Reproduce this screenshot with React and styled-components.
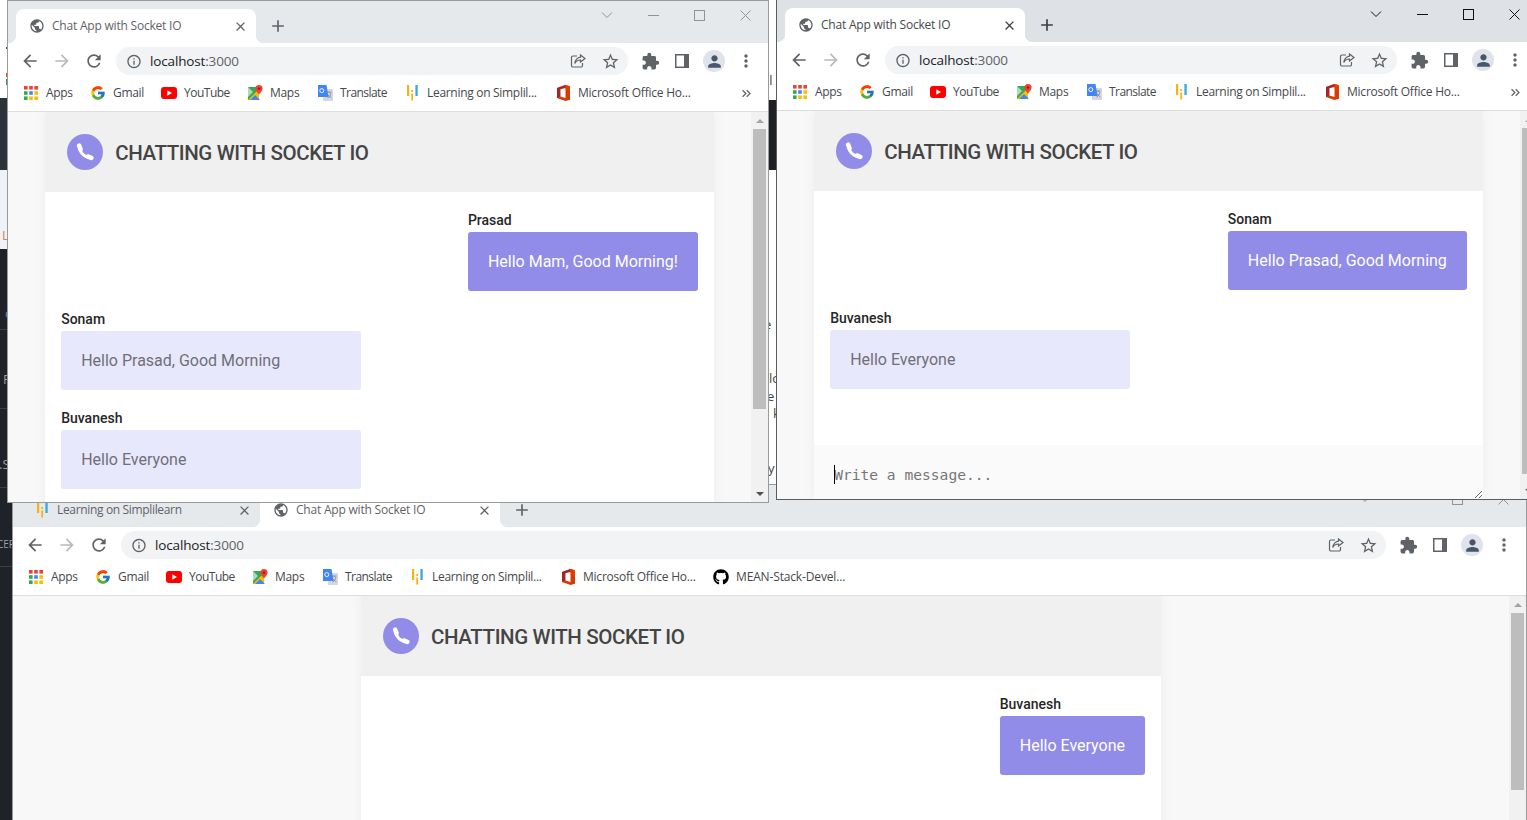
import React from 'react'
import styled, { createGlobalStyle } from 'styled-components'
import { FcGoogle } from 'react-icons/fc'
import { FaGithub } from 'react-icons/fa'
import {
  MdArrowBack, MdArrowForward, MdRefresh, MdInfoOutline, MdStarBorder,
  MdExtension, MdPerson, MdMoreVert, MdPublic, MdClose, MdAdd, MdKeyboardDoubleArrowRight
} from 'react-icons/md'

const UI_FONT = `"Open Sans", "Noto Sans", sans-serif`

const GlobalStyle = createGlobalStyle`
  html, body { margin: 0; padding: 0; background: #fff; overflow: hidden; }
  * { box-sizing: border-box; }
`

const Desktop = styled.div`
  position: relative;
  width: 1527px;
  height: 820px;
  overflow: hidden;
  background: #fff;
`

/* whatever is open behind the browser windows */
const BehindStrip = styled.div`
  position: absolute;
  top: 0;
  left: ${p => p.$left}px;
  width: ${p => p.$width}px;
  height: 820px;
  display: flex;
  flex-direction: column;
  overflow: hidden;
`

const StripBlock = styled.div`
  height: ${p => p.$h}px;
  flex: none;
  background: ${p => p.$bg};
  border-bottom: ${p => (p.$line ? '1px solid #3a3f45' : 'none')};
`

const Fragment = styled.span`
  position: absolute;
  left: ${p => p.$x}px;
  top: ${p => p.$y}px;
  font: ${p => p.$size || 13}px/16px ${UI_FONT};
  color: ${p => p.$color || '#444'};
`

const Speck = styled.span`
  position: absolute;
  left: 6px;
  top: ${p => p.$y}px;
  width: 1px;
  height: ${p => p.$h}px;
  background: ${p => p.$color};
`

const Window = styled.div`
  position: absolute;
  left: ${p => p.$left}px;
  top: ${p => p.$top}px;
  width: ${p => p.$width}px;
  height: ${p => p.$height}px;
  z-index: ${p => p.$z};
  border: 1px solid ${p => (p.$active ? '#5c5c5c' : '#9a9a9a')};
  background: #fff;
  display: flex;
  flex-direction: column;
  overflow: hidden;
`

const TabStrip = styled.div`
  height: 42px;
  flex: none;
  display: flex;
  background: ${p => (p.$active ? '#dee1e6' : '#e6e9ec')};
  padding-left: 8px;
`

const Tabs = styled.div`
  display: flex;
  align-items: flex-end;
  height: 42px;
`

const Tab = styled.div`
  position: relative;
  width: ${p => (p.$selected ? 240 : 239)}px;
  height: 34px;
  flex: none;
  display: flex;
  align-items: center;
  padding: 0 8px 0 13px;
  gap: 7px;
  background: ${p => (p.$selected ? '#fff' : 'transparent')};
  border-radius: 8px 8px 0 0;
  ${p => p.$selected && `
    &::before, &::after {
      content: '';
      position: absolute;
      bottom: 0;
      width: 8px;
      height: 8px;
      background: radial-gradient(circle at var(--c), transparent 8px, #fff 8.5px);
    }
    &::before { left: -8px; --c: 0 0; }
    &::after { right: -8px; --c: 100% 0; }
  `}
`

const TabIcon = styled.span`
  width: 16px;
  height: 16px;
  flex: none;
  display: flex;
  align-items: center;
  justify-content: center;
  color: #5f6368;
  font-size: 18px;
`

const TabTitle = styled.span`
  flex: 1;
  font: 12px/16px ${UI_FONT};
  letter-spacing: ${p => (p.$selected ? -0.21 : -0.34)}px;
  color: ${p => (p.$active ? '#45494d' : '#5f6368')};
  white-space: nowrap;
  overflow: hidden;
`

const TabClose = styled.span`
  width: 16px;
  height: 16px;
  display: flex;
  align-items: center;
  justify-content: center;
  flex: none;
  font-size: 15px;
  color: ${p => (p.$active ? '#3c4043' : '#5f6368')};
`

const NewTab = styled.span`
  align-self: flex-end;
  height: 34px;
  margin-left: 12px;
  display: flex;
  align-items: center;
  font-size: 20px;
  color: ${p => (p.$active ? '#3c4043' : '#5f6368')};
`

const WindowControls = styled.div`
  display: flex;
  margin-left: auto;
  height: 28px;
`

const WindowControl = styled.span`
  width: 46px;
  display: flex;
  align-items: center;
  justify-content: center;
  color: ${p => (p.$active ? '#111' : '#8f9499')};
`

const Toolbar = styled.div`
  height: 33px;
  flex: none;
  display: flex;
  padding: 4px 6px 1px;
  background: #fff;
`

const ToolButton = styled.span`
  width: 32px;
  height: 28px;
  flex: none;
  display: flex;
  align-items: center;
  justify-content: center;
  font-size: ${p => p.$size || 20}px;
  color: ${p => p.$color || '#5f6368'};
`

const Omnibox = styled.div`
  flex: 1;
  margin: 0 6px;
  height: 28px;
  border-radius: 14px;
  background: #f1f3f4;
  display: flex;
  align-items: center;
  padding: 0 2px 0 10px;
`

const SiteInfo = styled.span`
  width: 16px;
  height: 16px;
  display: flex;
  align-items: center;
  justify-content: center;
  font-size: 17px;
  color: #5f6368;
  margin-right: 8px;
`

const Url = styled.span`
  flex: 1;
  font: 13.5px/18px ${UI_FONT};
  letter-spacing: -0.15px;
  color: #202124;
  & > span { color: #5f6368; }
`

const Avatar = styled.span`
  width: 22px;
  height: 22px;
  border-radius: 50%;
  background: #e0e3e9;
  display: flex;
  align-items: center;
  justify-content: center;
  font-size: 19px;
  color: #47566f;
`

const BookmarksBar = styled.div`
  height: 36px;
  flex: none;
  display: flex;
  align-items: center;
  gap: 17px;
  padding: 0 14px 1px 15px;
  border-bottom: 1px solid #dcdddf;
  background: #fff;
`

const Bookmark = styled.div`
  display: flex;
  align-items: center;
  gap: 7px;
  flex: none;
`

const BookmarkIcon = styled.span`
  width: 16px;
  height: 16px;
  display: flex;
  align-items: center;
  justify-content: center;
  font-size: 16px;
`

const BookmarkLabel = styled.span`
  width: ${p => p.$w}px;
  font: 12px/16px ${UI_FONT};
  letter-spacing: ${p => p.$tracking || -0.3}px;
  color: #45494d;
  white-space: nowrap;
`

const MoreBookmarks = styled.span`
  margin-left: auto;
  display: flex;
  font-size: 15px;
  color: #5f6368;
`

const Viewport = styled.div`
  flex: 1;
  min-height: 0;
  display: flex;
  background: #f8f8f8;
`

const PageArea = styled.div`
  flex: 1;
  min-width: 0;
  overflow: hidden;
`

const Scrollbar = styled.div`
  width: 17px;
  flex: none;
  background: #f1f1f1;
  display: flex;
  flex-direction: column;
  align-items: center;
`

const ScrollArrow = styled.span`
  height: 17px;
  flex: none;
  display: flex;
  align-items: center;
  &::after {
    content: '';
    border-left: 4px solid transparent;
    border-right: 4px solid transparent;
    ${p => (p.$down ? 'border-top: 4px solid #505050;' : 'border-bottom: 4px solid #a3a3a3;')}
  }
`

const ScrollThumb = styled.span`
  width: 13px;
  flex: none;
  height: ${p => p.$h}px;
  background: #bdbdbd;
`

const ScrollSpacer = styled.span`
  flex: 1;
`

const ChatWindow = styled.div`
  width: 90%;
  max-width: 800px;
  min-height: 100%;
  margin: 0 auto;
  background: #fff;
  box-shadow: 0 0 12px rgba(0, 0, 0, 0.05);
`

const ChatHeader = styled.header`
  height: 80px;
  display: flex;
  align-items: center;
  gap: 12px;
  padding-left: 22px;
  background: #f0f0f0;
`

const CallBadge = styled.span`
  width: 36px;
  height: 36px;
  border-radius: 50%;
  background: #908ce8;
  display: flex;
  align-items: center;
  justify-content: center;
`

const ChatTitle = styled.h1`
  margin: 1px 0 0;
  font: 500 20.5px/28px Roboto, sans-serif;
  letter-spacing: -0.39px;
  color: #444;
  text-transform: uppercase;
`

const MessageList = styled.div`
  display: flex;
  flex-direction: column;
  gap: 20px;
  padding: 20px 16px 0;
  min-height: ${p => p.$minHeight || 0}px;
`

const Message = styled.div`
  display: flex;
  flex-direction: column;
  gap: 4px;
  align-self: ${p => (p.$own ? 'flex-end' : 'flex-start')};
`

const Sender = styled.span`
  font: 500 14px/16px Roboto, sans-serif;
  color: #262626;
`

const Bubble = styled.div`
  width: ${p => (p.$own ? 'auto' : '300px')};
  padding: 20px;
  border-radius: 3px;
  font: 400 16px/19px Roboto, sans-serif;
  background: ${p => (p.$own ? '#908ce8' : '#e8e8fc')};
  color: ${p => (p.$own ? '#fff' : '#6f6f78')};
`

const Composer = styled.div`
  position: relative;
  display: flex;
  height: 54px;
`

const ComposerInput = styled.textarea`
  width: 100%;
  height: 54px;
  border: none;
  outline: none;
  padding: 21px 20px 0 20px;
  background: #fafafa;
  font: 14.6px/17px "DejaVu Sans Mono", "Liberation Mono", monospace;
  &::placeholder { color: #767676; }
`

const Caret = styled.span`
  position: absolute;
  left: 20px;
  top: 20px;
  width: 1px;
  height: 19px;
  background: #000;
`

const PhoneGlyph = () => (
  <svg width="18" height="18" viewBox="0 0 18 18" fill="none" stroke="#fff" strokeLinecap="round">
    <path d="M3.300 3.500C3.500 9.500 8.500 14.500 14.500 14.700" strokeWidth="3" />
    <path d="M3.200 2.700 4.500 6.200" strokeWidth="4.600" />
    <path d="M11.800 13.500 15.300 14.800" strokeWidth="4.600" />
  </svg>
)

const ChevronGlyph = () => (
  <svg width="12" height="8" viewBox="0 0 12 8" fill="none" stroke="currentColor">
    <path d="M1 1.500 6 6.500 11 1.500" />
  </svg>
)

const MinimizeGlyph = () => (
  <svg width="11" height="3" viewBox="0 0 11 3" stroke="currentColor">
    <path d="M0 1.500H11" />
  </svg>
)

const MaximizeGlyph = () => (
  <svg width="11" height="11" viewBox="0 0 11 11" fill="none" stroke="currentColor">
    <rect x="0.500" y="0.500" width="10" height="10" />
  </svg>
)

const CloseGlyph = () => (
  <svg width="11" height="11" viewBox="0 0 11 11" fill="none" stroke="currentColor">
    <path d="M0.500 0.500 10.500 10.500M10.500 0.500 0.500 10.500" />
  </svg>
)

const ShareGlyph = () => (
  <svg width="16" height="16" viewBox="0 0 16 16" fill="none" stroke="#5f6368" strokeWidth="1.200">
    <path d="M7 3H3a1.500 1.500 0 0 0-1.500 1.500v8A1.500 1.500 0 0 0 3 14h8a1.500 1.500 0 0 0 1.500-1.500V10" />
    <path d="M10.500 2 15 5.600 10.500 9V7C8 7 6 8 4.800 10.500 5 7.200 7.500 4.400 10.500 4.200Z" />
  </svg>
)

const PanelGlyph = () => (
  <svg width="14" height="14" viewBox="0 0 14 14">
    <rect width="14" height="14" fill="#5f6368" />
    <rect x="1.500" y="1.500" width="7.500" height="11" fill="#fff" />
  </svg>
)

const AppsGlyph = () => {
  const colors = ['#ea4335', '#ea4335', '#ea4335', '#34a853', '#4285f4', '#fbbc04', '#34a853', '#fbbc04', '#fbbc04']
  return (
    <svg width="14" height="14" viewBox="0 0 14 14">
      {colors.map((c, i) => (
        <rect key={i} x={(i % 3) * 5.2} y={Math.floor(i / 3) * 5.2} width="3.600" height="3.600" fill={c} />
      ))}
    </svg>
  )
}

const YouTubeGlyph = () => (
  <svg width="16" height="12" viewBox="0 0 16 12">
    <rect width="16" height="12" rx="3" fill="#f00" />
    <path d="M6.300 3.300 11 6 6.300 8.700Z" fill="#fff" />
  </svg>
)

const MapsGlyph = () => (
  <svg width="16" height="16" viewBox="0 0 16 16">
    <path d="M1 2h11v13H1Z" fill="#34a853" />
    <path d="M1 15 12 4v11Z" fill="#fbbc04" />
    <path d="M3 15 8 10l5 5Z" fill="#4285f4" />
    <path d="M1 2 6 7 1 12Z" fill="#e8eaed" opacity="0.7" />
    <path d="M12 0a3.600 3.600 0 0 1 3.600 3.600C15.600 6 12 9.500 12 9.500S8.400 6 8.400 3.600A3.600 3.600 0 0 1 12 0Z" fill="#ea4335" />
    <circle cx="12" cy="3.600" r="1.200" fill="#a50e0e" />
  </svg>
)

const TranslateGlyph = () => (
  <svg width="16" height="16" viewBox="0 0 16 16">
    <rect x="6" y="4" width="10" height="12" fill="#d5d8dc" />
    <path d="M10 7h4.500M12.200 7v1M10.500 13c2-1 3-2.500 3.400-5M11 9.500c.6 1.500 1.800 2.600 3.400 3.300" stroke="#7b8087" fill="none" strokeWidth="0.800" />
    <path d="M1 0h8.500l2 12H1Z" fill="#4285f4" />
    <circle cx="4.800" cy="5.600" r="2" fill="none" stroke="#fff" strokeWidth="0.900" />
  </svg>
)

const SimplilearnGlyph = () => (
  <svg width="11" height="16" viewBox="0 0 11 16">
    <rect x="0" y="0" width="2.200" height="11" fill="#f9b115" />
    <rect x="4.300" y="5" width="1.800" height="2" fill="#f9b115" />
    <rect x="4.300" y="8.500" width="1.800" height="7" fill="#f9b115" />
    <rect x="8.400" y="0" width="2.300" height="11" fill="#36a9e1" />
  </svg>
)

const OfficeGlyph = () => (
  <svg width="13" height="16" viewBox="0 0 13 16">
    <path d="M0 3 8.500 0 13 1.300v13.400L8.500 16 0 13Z" fill="#d83b01" />
    <path d="M0 3 8.500 0v2.500L3.500 4.300v7L0 13Z" fill="#a4262c" />
    <path d="M3.500 4.300 8.500 3v10l-5-1.500Z" fill="#fff" />
    <path d="M8.500 0 13 1.300V8L8.500 4Z" fill="#eb3c00" />
  </svg>
)

const BOOKMARKS = [
  { icon: <AppsGlyph />, label: 'Apps', w: 27 },
  { icon: <FcGoogle />, label: 'Gmail', w: 31 },
  { icon: <YouTubeGlyph />, label: 'YouTube', w: 46, tracking: -0.5 },
  { icon: <MapsGlyph />, label: 'Maps', w: 30 },
  { icon: <TranslateGlyph />, label: 'Translate', w: 47, tracking: -0.55 },
  { icon: <SimplilearnGlyph />, label: 'Learning on Simplil...', w: 111 },
  { icon: <OfficeGlyph />, label: 'Microsoft Office Ho...', w: 113, tracking: -0.23 },
]

const ChromeFrame = ({ left, top, width, height, z, active, tabs, github, thumb, children }) => (
  <Window $left={left} $top={top} $width={width} $height={height} $z={z} $active={active}>
    <TabStrip $active={active}>
      <Tabs>
        {tabs.map(t => (
          <Tab key={t.title} $selected={t.selected}>
            <TabIcon>{t.icon}</TabIcon>
            <TabTitle $active={active} $selected={t.selected}>{t.title}</TabTitle>
            <TabClose $active={active}><MdClose /></TabClose>
          </Tab>
        ))}
      </Tabs>
      <NewTab $active={active}><MdAdd /></NewTab>
      <WindowControls>
        <WindowControl $active={active}><ChevronGlyph /></WindowControl>
        <WindowControl $active={active}><MinimizeGlyph /></WindowControl>
        <WindowControl $active={active}><MaximizeGlyph /></WindowControl>
        <WindowControl $active={active}><CloseGlyph /></WindowControl>
      </WindowControls>
    </TabStrip>

    <Toolbar>
      <ToolButton><MdArrowBack /></ToolButton>
      <ToolButton $color="#b8babd"><MdArrowForward /></ToolButton>
      <ToolButton><MdRefresh /></ToolButton>
      <Omnibox>
        <SiteInfo><MdInfoOutline /></SiteInfo>
        <Url>localhost<span>:3000</span></Url>
        <ToolButton><ShareGlyph /></ToolButton>
        <ToolButton $size={19}><MdStarBorder /></ToolButton>
      </Omnibox>
      <ToolButton $size={19}><MdExtension /></ToolButton>
      <ToolButton><PanelGlyph /></ToolButton>
      <ToolButton><Avatar><MdPerson /></Avatar></ToolButton>
      <ToolButton><MdMoreVert /></ToolButton>
    </Toolbar>

    <BookmarksBar>
      {BOOKMARKS.map(b => (
        <Bookmark key={b.label}>
          <BookmarkIcon>{b.icon}</BookmarkIcon>
          <BookmarkLabel $w={b.w} $tracking={b.tracking}>{b.label}</BookmarkLabel>
        </Bookmark>
      ))}
      {github ? (
        <Bookmark>
          <BookmarkIcon><FaGithub /></BookmarkIcon>
          <BookmarkLabel $w={109} $tracking={-0.15}>MEAN-Stack-Devel...</BookmarkLabel>
        </Bookmark>
      ) : (
        <MoreBookmarks><MdKeyboardDoubleArrowRight /></MoreBookmarks>
      )}
    </BookmarksBar>

    <Viewport>
      <PageArea>{children}</PageArea>
      <Scrollbar>
        <ScrollArrow />
        <ScrollThumb $h={thumb} />
        <ScrollSpacer />
        <ScrollArrow $down />
      </Scrollbar>
    </Viewport>
  </Window>
)

const Chat = ({ messages, minHeight, composer }) => (
  <ChatWindow>
    <ChatHeader>
      <CallBadge><PhoneGlyph /></CallBadge>
      <ChatTitle>Chatting with Socket IO</ChatTitle>
    </ChatHeader>
    <MessageList $minHeight={minHeight}>
      {messages.map(m => (
        <Message key={m.sender} $own={m.own}>
          <Sender>{m.sender}</Sender>
          <Bubble $own={m.own}>{m.text}</Bubble>
        </Message>
      ))}
    </MessageList>
    {composer && (
      <Composer>
        <ComposerInput readOnly placeholder="Write a message..." />
        <Caret />
      </Composer>
    )}
  </ChatWindow>
)

const chatTab = { title: 'Chat App with Socket IO', icon: <MdPublic />, selected: true }
const learnTab = { title: 'Learning on Simplilearn', icon: <SimplilearnGlyph /> }

export default function App() {
  return (
    <Desktop>
      <GlobalStyle />

      <BehindStrip $left={0} $width={12}>
        <StripBlock $h={98} $bg="#fff" />
        <StripBlock $h={72} $bg="#2d333b" />
        <StripBlock $h={79} $bg="#eef3f7" />
        <StripBlock $h={81} $bg="#1f2329" $line />
        <StripBlock $h={79} $bg="#1f2329" $line />
        <StripBlock $h={79} $bg="#1f2329" $line />
        <StripBlock $h={79} $bg="#1f2329" $line />
        <StripBlock $h={254} $bg="#1f2329" />
        <Speck $y={47} $h={2} $color="#555" />
        <Speck $y={73} $h={4} $color="#e0483a" />
        <Speck $y={79} $h={6} $color="#3a9a55" />
        <Fragment $x={2} $y={227} $color="#c98a5a">L</Fragment>
        <Fragment $x={5} $y={305} $color="#5b8fa8">c</Fragment>
        <Fragment $x={3} $y={371} $color="#9aa0a6">P</Fragment>
        <Fragment $x={-1} $y={456} $color="#9aa0a6">.S</Fragment>
        <Fragment $x={-3} $y={536} $size={10} $color="#9aa0a6">CEF</Fragment>
      </BehindStrip>

      <BehindStrip $left={768} $width={10}>
        <StripBlock $h={100} $bg="#fff" />
        <StripBlock $h={70} $bg="#1e2023" />
        <StripBlock $h={650} $bg="#fff" />
        <Fragment $x={-5} $y={72}>cl</Fragment>
        <Fragment $x={-4} $y={316}>e</Fragment>
        <Fragment $x={1} $y={370}>lo</Fragment>
        <Fragment $x={-1} $y={388}>e</Fragment>
        <Fragment $x={5} $y={405}>k</Fragment>
        <Fragment $x={0} $y={460}>y</Fragment>
      </BehindStrip>

      <ChromeFrame
        left={12} top={484} width={1515} height={420} z={1}
        tabs={[learnTab, chatTab]} github thumb={177}
      >
        <Chat messages={[{ sender: 'Buvanesh', text: 'Hello Everyone', own: true }]} minHeight={500} />
      </ChromeFrame>

      <ChromeFrame left={7} top={0} width={762} height={503} z={2} tabs={[chatTab]} thumb={280}>
        <Chat
          messages={[
            { sender: 'Prasad', text: 'Hello Mam, Good Morning!', own: true },
            { sender: 'Sonam', text: 'Hello Prasad, Good Morning' },
            { sender: 'Buvanesh', text: 'Hello Everyone' },
          ]}
          minHeight={400}
        />
      </ChromeFrame>

      <ChromeFrame left={776} top={-1} width={762} height={501} z={3} active tabs={[chatTab]} thumb={346}>
        <Chat
          messages={[
            { sender: 'Sonam', text: 'Hello Prasad, Good Morning', own: true },
            { sender: 'Buvanesh', text: 'Hello Everyone' },
          ]}
          minHeight={254}
          composer
        />
      </ChromeFrame>
    </Desktop>
  )
}
